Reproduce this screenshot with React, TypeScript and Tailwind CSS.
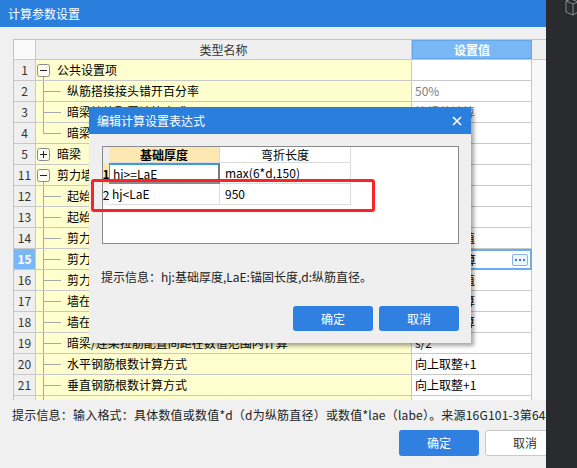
import React from "react";

const FONT = { fontFamily: '"Noto Sans CJK SC", "Microsoft YaHei", sans-serif' };

type Row = {
  n: number;
  text: string;
  kind: "group" | "child";
  open?: boolean;
  last?: boolean;
  value?: string;
  gray?: boolean;
};

const rows: Row[] = [
  { n: 1, text: "公共设置项", kind: "group", open: true },
  { n: 2, text: "纵筋搭接接头错开百分率", kind: "child", value: "50%", gray: true },
  { n: 3, text: "暗梁拉筋配置计算方式", kind: "child", value: "按规范计算", gray: true },
  { n: 4, text: "暗梁箍筋加密区长度", kind: "child", last: true, value: "" },
  { n: 5, text: "暗梁", kind: "group", open: false },
  { n: 11, text: "剪力墙", kind: "group", open: true },
  { n: 12, text: "起始水平钢筋距暗柱边距离", kind: "child", value: "50" },
  { n: 13, text: "起始竖向钢筋距暗柱边距离", kind: "child", value: "s/2" },
  { n: 14, text: "剪力墙竖向钢筋弯折长度", kind: "child", value: "按规范取值" },
  { n: 15, text: "剪力墙基础插筋弯折长度", kind: "child", value: "按设定计算" },
  { n: 16, text: "剪力墙顶层竖向钢筋锚固", kind: "child", value: "按规范取值" },
  { n: 17, text: "墙在基础中的插筋构造", kind: "child", value: "按规范计算" },
  { n: 18, text: "墙在顶层的钢筋构造", kind: "child", value: "按规范计算" },
  { n: 19, text: "暗梁/连梁拉筋配置间距在数值范围内计算", kind: "child", value: "s/2" },
  { n: 20, text: "水平钢筋根数计算方式", kind: "child", value: "向上取整+1" },
  { n: 21, text: "垂直钢筋根数计算方式", kind: "child", value: "向上取整+1" },
];

function TreeMark({ row }: { row: Row }) {
  if (row.kind === "group") {
    return (
      <svg width="21" height="21" className="shrink-0">
        <rect x="1.5" y="4.5" width="12" height="12" rx="2" fill="#fdfdf4" stroke="#8a8a8a" />
        <line x1="4" y1="10.5" x2="11" y2="10.5" stroke="#222" />
        {!row.open && <line x1="7.5" y1="7" x2="7.5" y2="14" stroke="#222" />}
        {row.open && <line x1="7.5" y1="17" x2="7.5" y2="21" stroke="#a8a8a8" />}
      </svg>
    );
  }
  return (
    <svg width="30" height="21" className="shrink-0">
      <line x1="7.5" y1="0" x2="7.5" y2={row.last ? 10.5 : 21} stroke="#a8a8a8" />
      <line x1="7.5" y1="10.5" x2="25" y2="10.5" stroke="#a8a8a8" />
    </svg>
  );
}

function ParamTable() {
  return (
    <div className="h-[361px] overflow-hidden border-l border-t border-[#c4c4c4] bg-[#f8f8f8]">
      <div className="flex h-[20px] border-b border-[#c8c8c8] bg-[#efefef]">
        <div className="w-[22px] shrink-0 border-r border-[#c8c8c8] bg-[#fafafa]" />
        <div className="flex w-[376px] shrink-0 items-center justify-center border-r border-[#c8c8c8] text-[#333]">
          类型名称
        </div>
        <div className="flex w-[120px] shrink-0 items-center justify-center border border-[#64a6ea] bg-[#7ab8f5] font-bold text-white">
          设置值
        </div>
      </div>
      {rows.map((r) => {
        const sel = r.n === 15;
        return (
          <div key={r.n} className="flex h-[21px]">
            <div
              className={`flex w-[22px] shrink-0 items-center justify-center border-b border-r border-[#c8c8c8] ${
                sel ? "bg-[#7ab8f5] font-bold text-white" : "bg-[#efefef] text-[#333]"
              }`}
            >
              {r.n}
            </div>
            <div className="flex w-[376px] shrink-0 items-center overflow-hidden whitespace-nowrap border-b border-r border-[#c8c8c8] bg-[#fffecf] text-black">
              <TreeMark row={r} />
              <span className={r.kind === "child" ? "ml-[1px]" : ""}>{r.text}</span>
            </div>
            {sel ? (
              <div className="flex w-[120px] shrink-0 items-center justify-between border-2 border-[#6aacf0] bg-white pl-[2px] pr-[2px] text-black">
                <span>{r.value}</span>
                <span className="flex h-[12px] w-[16px] items-center justify-center gap-[2px] rounded-[2px] border border-[#86b4e6] bg-[#eef4fb]">
                  <span className="h-[2px] w-[2px] bg-[#3b82d6]" />
                  <span className="h-[2px] w-[2px] bg-[#3b82d6]" />
                  <span className="h-[2px] w-[2px] bg-[#3b82d6]" />
                </span>
              </div>
            ) : (
              <div
                className={`flex w-[120px] shrink-0 items-center border-b border-r border-[#c8c8c8] bg-white pl-[3px] ${
                  r.gray ? "text-[#808080]" : "text-black"
                }`}
              >
                {r.value}
              </div>
            )}
          </div>
        );
      })}
      {/* partly visible next row */}
      <div className="flex h-[21px]">
        <div className="w-[22px] shrink-0 border-r border-[#c8c8c8] bg-[#efefef]" />
        <div className="w-[376px] shrink-0 border-r border-[#c8c8c8] bg-[#fffecf]">
          <svg width="30" height="21">
            <line x1="7.5" y1="0" x2="7.5" y2="21" stroke="#a8a8a8" />
          </svg>
        </div>
        <div className="w-[120px] shrink-0 border-r border-[#c8c8c8] bg-white" />
      </div>
    </div>
  );
}

function ExprDialog() {
  return (
    <div className="absolute left-[89px] top-[107px] flex h-[236px] w-[382px] flex-col bg-[#efefef] shadow-[3px_3px_4px_rgba(0,0,0,0.35)]">
      <div className="flex h-[27px] shrink-0 items-center justify-between bg-[#2b7fdc] pl-[8px] pr-[9px] text-white">
        <span>编辑计算设置表达式</span>
        <svg width="10" height="10" viewBox="0 0 10 10">
          <path d="M1 1L9 9M9 1L1 9" stroke="#fff" strokeWidth="1.6" />
        </svg>
      </div>
      <div className="mx-[12px] ml-[13px] mt-[12px] h-[98px] border border-[#8a8a8a] bg-white">
        <div className="flex h-[16px] text-black">
          <div className="w-[6px] shrink-0 bg-[#eeeeee]" />
          <div className="flex w-[111px] shrink-0 items-center justify-center border-b border-r border-[#dcdcdc] bg-[#fde8b4] font-bold">
            基础厚度
          </div>
          <div className="flex w-[131px] shrink-0 items-center justify-center border-b border-r border-[#dcdcdc] bg-white">
            弯折长度
          </div>
        </div>
        <div className="flex h-[21px] text-black">
          <div className="flex w-[6px] shrink-0 items-center justify-center bg-[#fde8b4] font-bold">1</div>
          <div className="flex w-[111px] shrink-0 items-center border-b-2 border-l border-r-2 border-t-2 border-b-[#8a8a8a] border-l-[#3d9bd8] border-r-[#7a7a7a] border-t-[#3d9bd8] pl-[3px]">
            hj&gt;=LaE
          </div>
          <div className="flex w-[131px] shrink-0 items-center border-b border-r border-[#dcdcdc] pl-[5px]">
            max(6*d,150)
          </div>
        </div>
        <div className="flex h-[21px] text-black">
          <div className="flex w-[6px] shrink-0 items-center justify-center bg-[#f4f4f4]">2</div>
          <div className="flex w-[111px] shrink-0 items-center border-b border-r border-[#dcdcdc] pl-[3px]">
            hj&lt;LaE
          </div>
          <div className="flex w-[131px] shrink-0 items-center border-b border-r border-[#dcdcdc] pl-[5px]">
            950
          </div>
        </div>
      </div>
      <div className="ml-[12px] mt-[24px] leading-[17px] text-[#222]">
        提示信息：hj:基础厚度,LaE:锚固长度,d:纵筋直径。
      </div>
      <div className="mt-[21px] flex justify-end gap-[6px] pr-[12px]">
        <button type="button" className="h-[25px] w-[80px] rounded-[3px] bg-[#2f80e1] text-white">
          确定
        </button>
        <button type="button" className="h-[25px] w-[80px] rounded-[3px] bg-[#2f80e1] text-white">
          取消
        </button>
      </div>
      {/* red annotation box */}
      <div className="absolute left-[2px] top-[72px] h-[33px] w-[284px] rounded-[3px] border-[3px] border-[#fb2424]" />
    </div>
  );
}

export default function App() {
  return (
    <div className="flex h-[468px] w-[577px] overflow-hidden text-[12px]" style={FONT}>
      <div className="relative h-full w-[546px] shrink-0 overflow-hidden bg-[#f0f0f0]">
        <div className="flex h-full w-[620px] flex-col">
          <div className="flex h-[27px] shrink-0 items-center bg-[#2b7fdc] pl-[8px] text-[12px] text-white">
            计算参数设置
          </div>
          <div className="ml-[13px] mt-[12px]">
            <ParamTable />
          </div>
          <div className="ml-[12px] mt-[6px] whitespace-nowrap leading-[17px] tracking-[0.2px] text-[#222]">
            提示信息：输入格式：具体数值或数值*d（d为纵筋直径）或数值*lae（labe）。来源16G101-3第64页
          </div>
          <div className="mt-[7px] flex gap-[6px] pl-[399px]">
            <button type="button" className="h-[26px] w-[80px] rounded-[3px] bg-[#2f80e1] text-white">
              确定
            </button>
            <button
              type="button"
              className="h-[26px] w-[80px] rounded-[3px] border border-[#c8c8c8] bg-white text-[#333]"
            >
              取消
            </button>
          </div>
        </div>
        <ExprDialog />
      </div>
      <div className="flex flex-1 justify-end bg-[#2a2b2f]">
        <svg width="14" height="18" viewBox="0 0 14 18" className="mr-[-2px] mt-[-2px]">
          <path d="M1 3L6 1L13 4V14L8 17L1 14Z M1 3L8 6L13 4 M8 6V17" fill="none" stroke="#8a8b8f" strokeWidth="1" />
        </svg>
      </div>
    </div>
  );
}
